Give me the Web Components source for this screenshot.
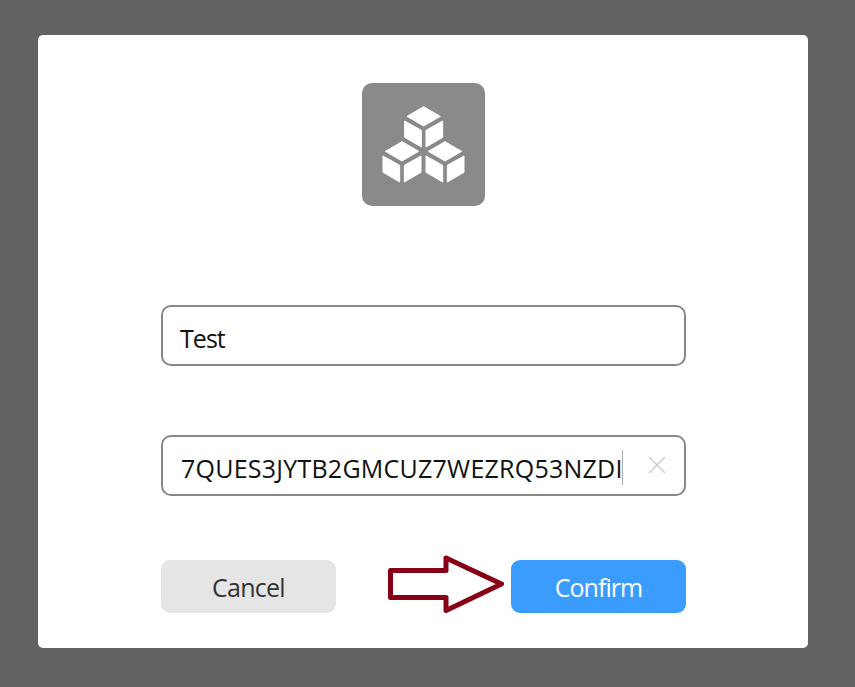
<!DOCTYPE html>
<html lang="en">
<head>
<meta charset="utf-8">
<title>Add account</title>
<style>
body {
  box-sizing: border-box;
  margin: 0;
  padding: 35px 0 0 38px;
  height: 687px;
  overflow: hidden;
  background: #616362;
  font-family: "Open Sans", "Noto Sans", sans-serif;
  font-size: 25px;
}
</style>
</head>
<body>
<account-dialog>
  <cube-logo slot="logo"></cube-logo>
  <text-field style="--spacing: -0.95px">Test</text-field>
  <text-field active style="--spacing: 0.24px">7QUES3JYTB2GMCUZ7WEZRQ53NZDI</text-field>
  <push-button slot="actions" style="--spacing: -0.75px">Cancel</push-button>
  <arrow-hint slot="actions"></arrow-hint>
  <push-button slot="actions" primary style="--spacing: -0.95px">Confirm</push-button>
</account-dialog>
<script>
class BaseElement extends HTMLElement {
  constructor() {
    super();
    var root = this.attachShadow({ mode: "open" });
    root.innerHTML = this.constructor.template;
  }
}

class AccountDialog extends BaseElement {
  static get template() {
    return `
<style>
:host {
  display: flex;
  flex-direction: column;
  align-items: center;
  box-sizing: border-box;
  width: 770px;
  height: 613px;
  padding: 48px 122px 0 123px;
  border-radius: 5px;
  background: #fff;
}

.fields {
  display: flex;
  flex-direction: column;
  gap: 69px;
  width: 100%;
  margin-top: 99px;
}

.actions {
  display: flex;
  justify-content: space-between;
  width: 100%;
  margin-top: 64px;
}
</style>
<slot name="logo"></slot>
<div class="fields"><slot></slot></div>
<div class="actions"><slot name="actions"></slot></div>`;
  }
}

class CubeLogo extends BaseElement {
  static get template() {
    return `
<style>
:host {
  display: block;
  width: 123px;
  height: 123px;
  border-radius: 10px;
  background: #8a8a8a;
}

svg {
  display: block;
}
</style>
<svg width="123" height="123" viewBox="21 21 369 369" fill="#fff" stroke="#fff" stroke-width="3" stroke-linejoin="round">
  <defs>
    <g id="cube">
      <path d="M0 -60 L50 -31 L0 -2 L-50 -31Z"/>
      <path d="M-57 -17 L-7 11 V61 L-57 32Z"/>
      <path d="M57 -17 L7 11 V61 L57 32Z"/>
    </g>
  </defs>
  <use href="#cube" x="206" y="152"/>
  <use href="#cube" x="141" y="257"/>
  <use href="#cube" x="270" y="257"/>
</svg>`;
  }
}

class TextField extends BaseElement {
  static get template() {
    return `
<style>
:host {
  display: flex;
  align-items: center;
  box-sizing: border-box;
  height: 61px;
  padding: 6px 18px 0 17px;
  border: 2px solid #888;
  border-radius: 10px;
  background: #fff;
  color: #111;
}

.value {
  line-height: 35px;
  white-space: nowrap;
  letter-spacing: var(--spacing, 0);
}

.caret, .clear {
  display: none;
}

:host([active]) .value {
  box-sizing: border-box;
  width: 442px;
  padding-left: 1px;
}

:host([active]) .caret {
  display: block;
  flex: none;
  width: 1px;
  height: 35px;
  margin-bottom: 2px;
  background: #aaa;
}

:host([active]) .clear {
  display: block;
  flex: none;
  margin: -7px 0 0 auto;
}
</style>
<span class="value"><slot></slot></span>
<span class="caret"></span>
<svg class="clear" width="18" height="18" viewBox="0 0 18 18" stroke="#ccc" stroke-width="1.5">
  <path d="M1 1 L17 17 M17 1 L1 17"/>
</svg>`;
  }
}

class PushButton extends BaseElement {
  static get template() {
    return `
<style>
:host {
  display: block;
  width: 175px;
  height: 53px;
}

button {
  width: 100%;
  height: 100%;
  padding: 1px 0 0;
  border: none;
  border-radius: 9px;
  background: #e5e5e5;
  color: #333;
  font: inherit;
  letter-spacing: var(--spacing, 0);
}

:host([primary]) button {
  background: #3a9cff;
  color: #fff;
}
</style>
<button><slot></slot></button>`;
  }
}

class ArrowHint extends BaseElement {
  static get template() {
    return `
<style>
:host {
  display: block;
  height: 53px;
  margin-left: 36px;
}

svg {
  display: block;
  margin-top: -6px;
}
</style>
<svg width="124" height="62" viewBox="0 0 124 62" fill="#fff" stroke="#880015" stroke-width="5" stroke-linejoin="round">
  <path d="M10.5 16.5 H66 V4 L121.5 30 L66 56.5 V43.5 H10.5Z"/>
</svg>`;
  }
}

window.customElements.define("account-dialog", AccountDialog);
window.customElements.define("cube-logo", CubeLogo);
window.customElements.define("text-field", TextField);
window.customElements.define("push-button", PushButton);
window.customElements.define("arrow-hint", ArrowHint);
</script>
</body>
</html>
